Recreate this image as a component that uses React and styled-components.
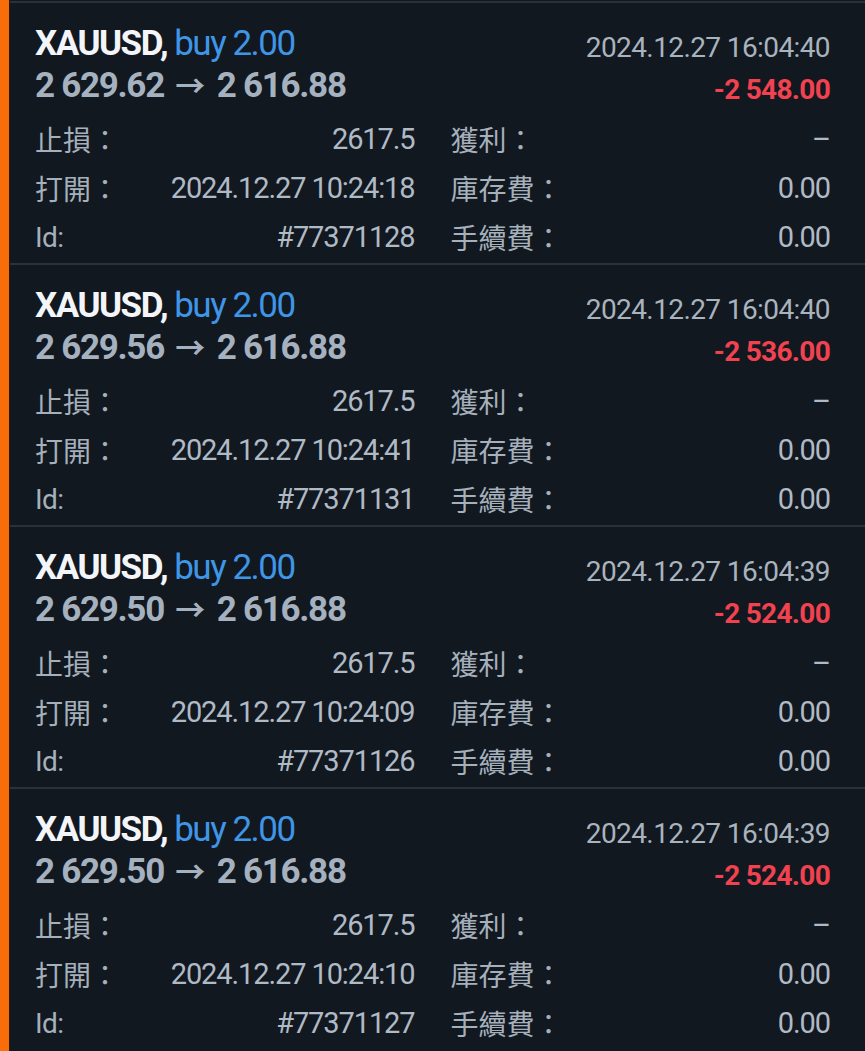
import React from 'react'
import styled, {createGlobalStyle} from 'styled-components'

const GlobalStyle = createGlobalStyle`
  html, body {
    margin: 0;
    padding: 0;
    background: #111820;
  }
  body {
    font-family: Roboto, "Noto Sans CJK TC", sans-serif;
  }
`;

const positions = [
  {open: '2 629.62', close: '2 616.88', time: '2024.12.27 16:04:40', profit: '-2 548.00', opened: '2024.12.27 10:24:18', id: '#77371128'},
  {open: '2 629.56', close: '2 616.88', time: '2024.12.27 16:04:40', profit: '-2 536.00', opened: '2024.12.27 10:24:41', id: '#77371131'},
  {open: '2 629.50', close: '2 616.88', time: '2024.12.27 16:04:39', profit: '-2 524.00', opened: '2024.12.27 10:24:09', id: '#77371126'},
  {open: '2 629.50', close: '2 616.88', time: '2024.12.27 16:04:39', profit: '-2 524.00', opened: '2024.12.27 10:24:10', id: '#77371127'},
];

const Field = ({label, value, latin}) => (
  <FieldRow>
    <Label latin={latin}>{label}</Label>
    <Value>{value}</Value>
  </FieldRow>
);

const PositionCard = ({p}) => (
  <Card>
    <Header>
      <Title>
        XAUUSD, <Buy>buy 2.00</Buy>
      </Title>
      <Time>{p.time}</Time>
      <Prices>{p.open} <Arrow>→</Arrow> {p.close}</Prices>
      <Profit>{p.profit}</Profit>
    </Header>
    <Fields>
      <Field label="止損：" value="2617.5" />
      <Field label="獲利：" value="–" />
      <Field label="打開：" value={p.opened} />
      <Field label="庫存費：" value="0.00" />
      <Field label="Id:" value={p.id} latin />
      <Field label="手續費：" value="0.00" />
    </Fields>
  </Card>
);

export default function App() {
  return (
    <>
      <GlobalStyle />
      <Page>
        <Accent />
        <List>
          {positions.map(p => <PositionCard key={p.id} p={p} />)}
        </List>
      </Page>
    </>
  )
}

const Page = styled.div`
  display: flex;
  min-height: 1051px;
  background: #111820;
`;
const Accent = styled.div`
  width: 9px;
  flex-shrink: 0;
  background: #f86c0a;
  border-right: 1px solid #2b1709;
`;
const List = styled.div`
  flex: 1;
  padding-top: 1px;
`;
const Card = styled.div`
  border-top: 2px solid #29313b;
  padding: 20px 35px 1px 25px;
  height: 262px;
  box-sizing: border-box;
`;
const Header = styled.div`
  display: grid;
  grid-template-columns: 1fr auto;
  grid-auto-rows: 42px;
  margin-bottom: 8px;
`;
const Title = styled.div`
  font-size: 35px;
  font-weight: 700;
  letter-spacing: -1.5px;
  line-height: 42px;
  color: #f3f5f8;
  white-space: nowrap;
`;
const Buy = styled.span`
  font-weight: 400;
  color: #3f95e6;
`;
const Time = styled.div`
  font-size: 28px;
  letter-spacing: -0.6px;
  line-height: 42px;
  padding-top: 4px;
  color: #a9b3be;
  text-align: right;
`;
const Prices = styled.div`
  font-size: 35px;
  font-weight: 700;
  letter-spacing: -1.3px;
  line-height: 42px;
  color: #a5b1be;
  white-space: nowrap;
`;
const Arrow = styled.span`
  font-size: 30px;
  letter-spacing: 0;
  margin: 0 4px;
`;
const Profit = styled.div`
  font-size: 28px;
  font-weight: 700;
  letter-spacing: -0.7px;
  line-height: 42px;
  padding-top: 4px;
  color: #f2424f;
  text-align: right;
`;
const Fields = styled.div`
  display: grid;
  grid-template-columns: 1fr 1fr;
  column-gap: 36px;
  grid-auto-rows: 49px;
`;
const FieldRow = styled.div`
  display: flex;
  justify-content: space-between;
  align-items: center;
  height: 49px;
`;
const Label = styled.span`
  font-family: ${p => p.latin ? 'Roboto, sans-serif' : '"Noto Sans CJK TC", sans-serif'};
  font-size: 28px;
  letter-spacing: ${p => p.latin ? '-0.6px' : '0'};
  line-height: 49px;
  color: #a6b0bb;
  white-space: nowrap;
`;
const Value = styled.span`
  font-size: 29px;
  letter-spacing: -1.1px;
  line-height: 49px;
  color: #b0bac5;
  white-space: nowrap;
`;
